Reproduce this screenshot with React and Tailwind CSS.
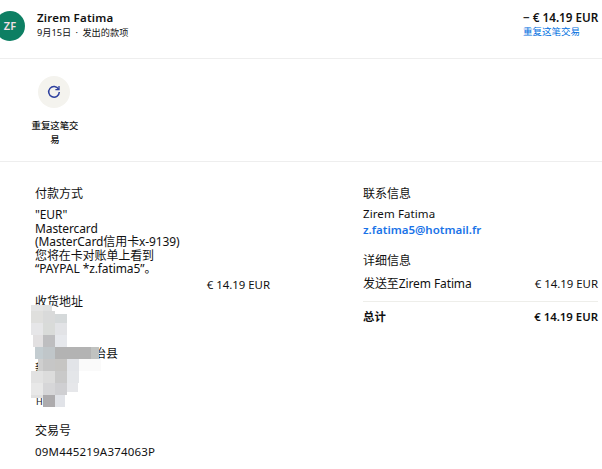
const F = { fontFamily: '"Noto Sans","Noto Sans CJK SC",sans-serif' };

const mosaic = [
  [31,305,12,6,"#e4e4e4"],[43,305,9,6,"#dfe0e0"],
  [31,311,12,12,"#dfdfdd"],[43,311,12,12,"#d9dada"],[55,314,12,9,"#d5d9da"],
  [31,323,12,12,"#e6e6e8"],[43,323,12,12,"#d9dbd9"],[55,323,12,12,"#e2e3e6"],
  [33,335,10,12,"#e2e0e1"],[43,335,12,12,"#bebec0"],[55,335,12,12,"#e6e8ec"],
  [35,347,8,12,"#c3ccd0"],[43,347,12,12,"#c0c6c9"],[55,347,36,12,"#b3b3b3"],[91,347,8,12,"#c0c2c0"],
  [38,359,5,12,"#cfcfcf"],[43,359,12,12,"#c6c6c6"],[55,359,12,12,"#c6c5c3"],[67,359,12,12,"#e2e4e8"],[79,359,22,12,"#fafafa"],
  [31,371,12,12,"#e2e2e2"],[43,371,12,12,"#dcdcdc"],[55,371,12,12,"#c9c9c9"],[67,371,12,12,"#e4e6e9"],
  [31,383,12,12,"#e8e8e8"],[43,383,12,12,"#d6d6d8"],[55,383,12,12,"#cfcfd2"],[67,383,11,9,"#e6e7ea"],
  [31,395,12,3,"#e0e0e0"],[43,395,12,12,"#adabad"],[55,395,10,12,"#e1e3e8"],
];

export default function App() {
  return (
    <div className="relative w-[602px] h-[469px] overflow-hidden bg-white text-[#111111]" style={F}>
      <header className="flex justify-between h-[59px] border-b border-[#eeeeee] pr-[4px]">
        <div className="flex">
          <div className="w-[30px] h-[30px] ml-[-5px] mt-[11px] rounded-full bg-[#0d7f63] text-[#f4dfe6] flex items-center justify-center text-[11px] font-semibold">ZF</div>
          <div className="ml-[12px] mt-[9px]">
            <div className="text-[11.5px] leading-[17px] font-semibold tracking-[0.2px]">Zirem Fatima</div>
            <div className="text-[9.2px] leading-[13px]">9月15日 <span className="mx-[2px]">·</span> 发出的款项</div>
          </div>
        </div>
        <div className="mt-[9px] w-[75px] text-[11.7px] leading-[17px] font-semibold">
          <div className="whitespace-nowrap">− € 14.19 EUR</div>
          <div className="text-[9.5px] leading-[12px] font-normal text-[#0070e0]">重复这笔交易</div>
        </div>
      </header>

      <section className="h-[103px] border-b border-[#eeeeee] pl-[31px] pt-[17px]">
        <div className="w-[46px] flex flex-col items-center">
          <div className="w-[32px] h-[32px] rounded-full bg-[#f4f3ee] flex items-center justify-center">
            <svg width="14" height="14" viewBox="0 0 14 14" fill="none" stroke="#2d3f9e" strokeWidth="1.5">
              <path d="M11.6 4.2A5.3 5.3 0 1 0 12.3 7" />
              <path d="M12 1v3.6H8.4" strokeWidth="1.3" />
            </svg>
          </div>
          <div className="w-[50px] mt-[11px] ml-[2px] text-center text-[9.4px] leading-[14px] font-medium">重复这笔交易</div>
        </div>
      </section>

      <main className="flex pl-[35px] pr-[4px] pt-[23px]">
        <div className="w-[235px]">
          <h3 className="text-[12px] leading-[18px]">付款方式</h3>
          <div className="mt-[5px] text-[12px] leading-[13.5px] tracking-[-0.1px]">
            <div>"EUR"</div>
            <div>Mastercard</div>
            <div>(MasterCard信用卡x-9139)</div>
            <div>您将在卡对账单上看到</div>
            <div>“PAYPAL *z.fatima5”。</div>
          </div>
          <div className="text-right text-[11.4px] leading-[17px]">€ 14.19 EUR</div>
          <h3 className="text-[12px] leading-[18px]">收货地址</h3>
          <div className="h-[111.5px] pt-[34.5px] text-[12px]">
            <div className="leading-[18px] pl-[59px]">治县</div>
            <div className="leading-[12px]">新</div>
            <div className="leading-[12px] mt-[21px] text-[9px] pl-[1px]">H</div>
          </div>
          <h3 className="text-[12px] leading-[18px]">交易号</h3>
          <div className="mt-[2.5px] text-[11.5px] leading-[17px] tracking-[0.2px]">09M445219A374063P</div>
        </div>
        <div className="ml-[93px] flex-1">
          <h3 className="text-[12px] leading-[18px]">联系信息</h3>
          <div className="mt-[3px] text-[11.5px] leading-[16px] tracking-[0.1px]">Zirem Fatima</div>
          <div className="text-[11.5px] leading-[16px] font-semibold text-[#1a73e8]">z.fatima5@hotmail.fr</div>
          <h3 className="mt-[14px] text-[12px] leading-[18px]">详细信息</h3>
          <div className="mt-[5px] flex justify-between text-[11.4px] leading-[17px]"><span className="text-[12px] tracking-[-0.1px]">发送至Zirem Fatima</span><span>€ 14.19 EUR</span></div>
          <div className="mt-[9px] pt-[6px] border-t border-[#eeeeea] flex justify-between text-[11.4px] leading-[17px] font-semibold"><span>总计</span><span>€ 14.19 EUR</span></div>
        </div>
      </main>

      <svg className="absolute left-0 top-0" width="110" height="410" shapeRendering="crispEdges">
        {mosaic.map(([x, y, w, h, c], i) => <rect key={i} x={x} y={y} width={w} height={h} fill={c} />)}
      </svg>
    </div>
  );
}
